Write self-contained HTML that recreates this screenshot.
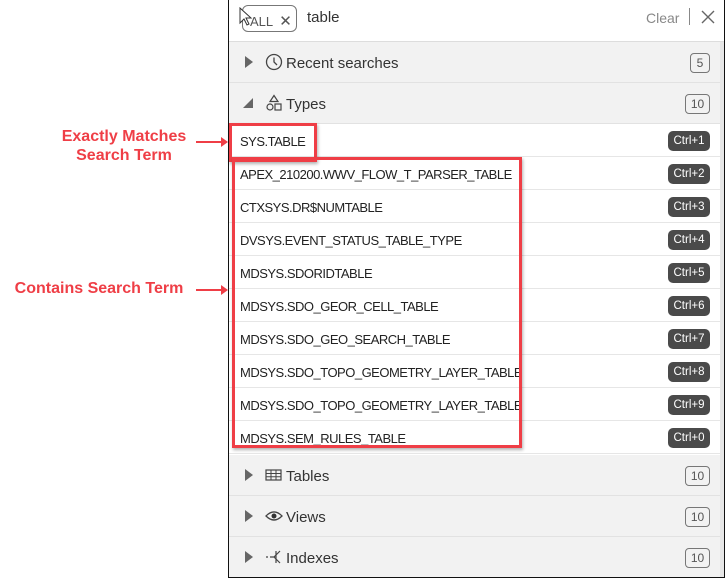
<!DOCTYPE html>
<html><head><meta charset="utf-8"><style>
*{box-sizing:border-box;margin:0;padding:0}
body{width:725px;height:578px;background:#fff;position:relative;overflow:hidden;font-family:"Liberation Sans",sans-serif;color:#222}
.panel{position:absolute;left:228px;top:0;width:497px;height:578px;border-left:1px solid #111;border-bottom:1px solid #111;border-right:1px solid #111;background:#fff}
.scroll{position:absolute;right:0;top:42px;width:4px;height:535px;background:#e6e6e6}
.hdr{position:absolute;left:0;top:0;width:495px;height:42px;border-bottom:1px solid #ddd}
.chip{position:absolute;left:13px;top:5px;width:55px;height:27px;border:1px solid #777;border-radius:6px;font-size:13px;color:#555;padding:6px 0 0 7px}
.q{position:absolute;left:78px;top:9px;font-size:15px;color:#333}
.clear{position:absolute;left:417px;top:10px;font-size:14px;color:#888}
.sep{position:absolute;left:460px;top:8px;width:1px;height:17px;background:#888}
.sec{position:absolute;left:0;width:491px;height:41px;background:#f2f2f2;border-bottom:1px solid #e2e2e2}
.sec .tri{position:absolute;left:16px;top:14px;width:0;height:0;border-top:6px solid transparent;border-bottom:6px solid transparent;border-left:8px solid #666}
.sec .lbl{position:absolute;left:57px;top:13px;font-size:15px;color:#333}
.sec .ico{position:absolute;left:36px;top:11px}
.cnt{position:absolute;right:10px;top:11px;width:25px;height:20px;border:1px solid #777;border-radius:4px;font-size:12px;color:#555;text-align:center;line-height:18px}
.item{position:absolute;left:0;width:491px;height:33px;border-bottom:1px solid #e6e6e6;background:#fff}
.item .t{position:absolute;left:11px;top:10px;font-size:13px;letter-spacing:-0.5px;color:#222}
.kb{position:absolute;right:10px;top:7px;width:42px;height:20px;background:#4a4a4a;border-radius:5px;color:#fff;font-size:11.5px;text-align:center;line-height:20px}
.rb{position:absolute;border:3px solid #ef3e46;box-shadow:1px 2px 3px rgba(0,0,0,.3)}
.ann{position:absolute;color:#ef3e46;font-weight:bold;font-size:16px;text-align:center;line-height:19px}
.arr{position:absolute;height:2px;background:#ef3e46}
.arr:after{content:"";position:absolute;right:-2px;top:-4px;border-top:5px solid transparent;border-bottom:5px solid transparent;border-left:7px solid #ef3e46}
</style></head><body>
<div class="panel">
 <div class="hdr">
  <div class="chip">ALL <span style="font-size:15px;margin-left:3px">✕</span></div>
  <div class="q">table</div>
  <div class="clear">Clear</div>
  <div class="sep"></div>
  <svg style="position:absolute;left:472px;top:10px" width="14" height="14"><path d="M1 1L13 13M13 1L1 13" stroke="#666" stroke-width="1.4"/></svg>
 </div>
 <div class="sec" style="top:42px"><div class="tri"></div>
  <svg class="ico" width="18" height="18"><circle cx="9" cy="9" r="7.5" fill="none" stroke="#444" stroke-width="1.3"/><path d="M9 4.5V9l3 3" fill="none" stroke="#444" stroke-width="1.3"/></svg>
  <div class="lbl">Recent searches</div><div class="cnt" style="width:20px">5</div></div>
 <div class="sec" style="top:83px"><div style="position:absolute;left:14px;top:15px;width:0;height:0;border-left:10px solid transparent;border-bottom:10px solid #666"></div>
  <svg class="ico" width="18" height="18"><path d="M9 1.5L13 7.5H5Z" fill="none" stroke="#444" stroke-width="1.2"/><circle cx="5" cy="13" r="3" fill="none" stroke="#444" stroke-width="1.2"/><rect x="10" y="10" width="6" height="6" fill="none" stroke="#444" stroke-width="1.2"/></svg>
  <div class="lbl">Types</div><div class="cnt">10</div></div>

 <div class="item" style="top:124px"><div class="t">SYS.TABLE</div><div class="kb">Ctrl+1</div></div>
 <div class="item" style="top:157px"><div class="t">APEX_210200.WWV_FLOW_T_PARSER_TABLE</div><div class="kb">Ctrl+2</div></div>
 <div class="item" style="top:190px"><div class="t">CTXSYS.DR$NUMTABLE</div><div class="kb">Ctrl+3</div></div>
 <div class="item" style="top:223px"><div class="t">DVSYS.EVENT_STATUS_TABLE_TYPE</div><div class="kb">Ctrl+4</div></div>
 <div class="item" style="top:256px"><div class="t">MDSYS.SDORIDTABLE</div><div class="kb">Ctrl+5</div></div>
 <div class="item" style="top:289px"><div class="t">MDSYS.SDO_GEOR_CELL_TABLE</div><div class="kb">Ctrl+6</div></div>
 <div class="item" style="top:322px"><div class="t">MDSYS.SDO_GEO_SEARCH_TABLE</div><div class="kb">Ctrl+7</div></div>
 <div class="item" style="top:355px"><div class="t">MDSYS.SDO_TOPO_GEOMETRY_LAYER_TABLE</div><div class="kb">Ctrl+8</div></div>
 <div class="item" style="top:388px"><div class="t">MDSYS.SDO_TOPO_GEOMETRY_LAYER_TABLE</div><div class="kb">Ctrl+9</div></div>
 <div class="item" style="top:421px"><div class="t">MDSYS.SEM_RULES_TABLE</div><div class="kb">Ctrl+0</div></div>

 <div class="sec" style="top:455px"><div class="tri"></div>
  <svg class="ico" width="18" height="18"><rect x="1" y="4" width="15" height="10" fill="none" stroke="#444" stroke-width="1.2"/><path d="M1 7.5H16M1 10.8H16M6 4V14M11 4V14" stroke="#444" stroke-width="1"/></svg>
  <div class="lbl">Tables</div><div class="cnt">10</div></div>
 <div class="sec" style="top:496px"><div class="tri"></div>
  <svg class="ico" width="18" height="18"><path d="M1 9Q9 1 17 9Q9 17 1 9Z" fill="none" stroke="#444" stroke-width="1.3"/><circle cx="9" cy="9" r="2.5" fill="#333"/></svg>
  <div class="lbl">Views</div><div class="cnt">10</div></div>
 <div class="sec" style="top:537px;height:40px;border-bottom:none"><div class="tri"></div>
  <svg class="ico" width="18" height="18"><path d="M1 9H3M5 9H9M15 3L9 9L15 15M11 3V15" fill="none" stroke="#444" stroke-width="1.2"/></svg>
  <div class="lbl">Indexes</div><div class="cnt">10</div></div>
 <div class="scroll"></div>
</div>

<svg style="position:absolute;left:239px;top:7px" width="14" height="20"><path d="M1 1V16L5 12L8 18L10 17L7 11H12Z" fill="#fff" stroke="#333" stroke-width="1"/></svg>

<div class="rb" style="left:229px;top:123px;width:88px;height:39px"></div>
<div class="rb" style="left:232px;top:157px;width:290px;height:291px"></div>

<div class="ann" style="left:34px;top:127px;width:180px">Exactly Matches<br>Search Term</div>
<div class="arr" style="left:196px;top:141px;width:30px"></div>
<div class="ann" style="left:4px;top:279px;width:190px">Contains Search Term</div>
<div class="arr" style="left:196px;top:289px;width:30px"></div>
</body></html>
